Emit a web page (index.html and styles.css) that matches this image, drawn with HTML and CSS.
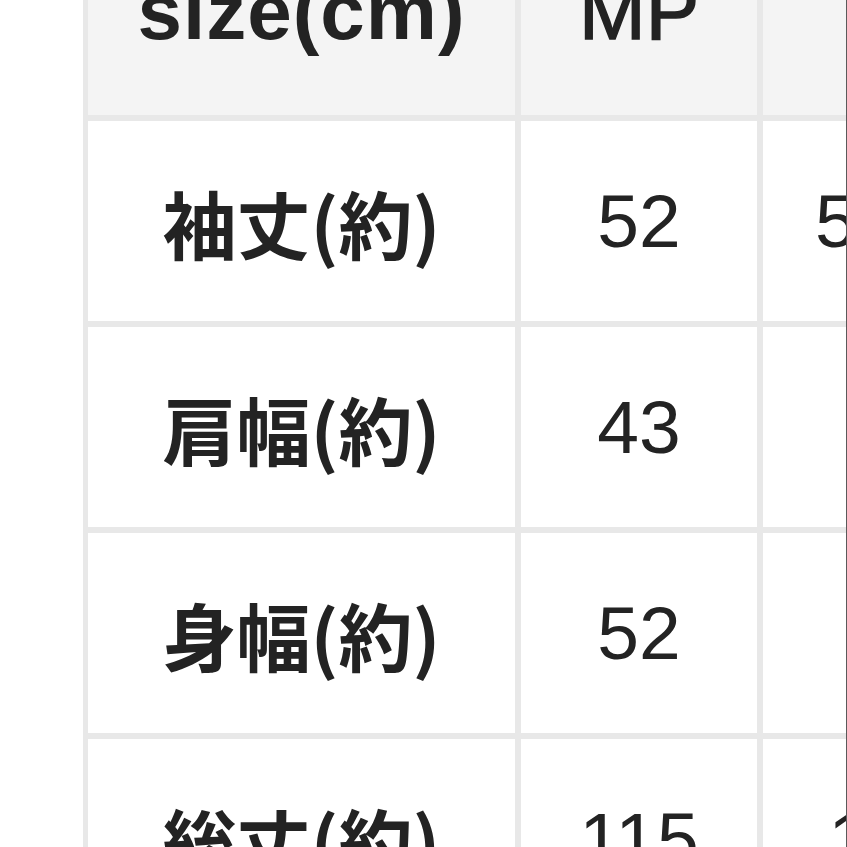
FILE: index.html
```html
<!DOCTYPE html>
<html lang="ja">
<head>
<meta charset="utf-8">
<link rel="stylesheet" href="styles.css">
</head>
<body>
<div class="frame">
  <div class="sheet">
    <div class="cell head label">size(cm)</div>
    <div class="cell head size">MP</div>
    <div class="cell head size">L</div>

    <div class="cell label">袖丈(約)</div>
    <div class="cell num">52</div>
    <div class="cell num">53.5</div>

    <div class="cell label">肩幅(約)</div>
    <div class="cell num">43</div>
    <div class="cell num">44</div>

    <div class="cell label">身幅(約)</div>
    <div class="cell num">52</div>
    <div class="cell num">54</div>

    <div class="cell label">総丈(約)</div>
    <div class="cell num">115</div>
    <div class="cell num">117</div>
  </div>
</div>
</body>
</html>
```
FILE: styles.css
```css
html, body {
  margin: 0;
  padding: 0;
  background: #ffffff;
}

.frame {
  width: 846px;
  height: 847px;
  overflow: hidden;
  border-right: 1px solid #5a5a5a;
  background: #ffffff;
}

.sheet {
  display: grid;
  grid-template-columns: 427px 236px 250px;
  grid-auto-rows: 200px;
  gap: 6px;
  padding: 0 6px 6px 5px;
  margin: -85px 0 0 83px;
  width: max-content;
  background: #e8e8e8;
}

.cell {
  background: #ffffff;
  display: flex;
  align-items: center;
  justify-content: center;
  color: #232323;
  white-space: nowrap;
}

.head {
  background: #f4f4f4;
  padding-bottom: 6px;
  box-sizing: border-box;
}

.label {
  font-family: "Noto Sans CJK JP", "Noto Sans", sans-serif;
  font-weight: 700;
  font-size: 74px;
}

.head.label {
  font-family: "Liberation Sans", "Noto Sans CJK JP", sans-serif;
  font-size: 80px;
  font-weight: 700;
  letter-spacing: 1px;
}

.head.size {
  font-family: "Liberation Sans", sans-serif;
  font-weight: 400;
  font-size: 80px;
  -webkit-text-stroke: 1.5px #232323;
}

.num {
  font-family: "Liberation Sans", sans-serif;
  font-weight: 400;
  font-size: 75px;
}
```
